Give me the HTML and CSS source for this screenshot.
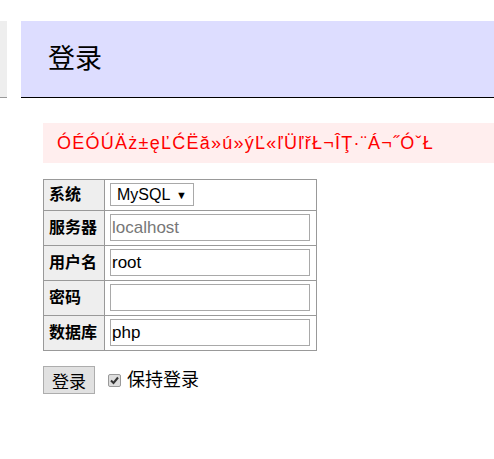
FILE: index.html
```html
<!DOCTYPE html>
<html lang="zh">
<head>
<meta charset="utf-8">
<title>登录</title>
<link rel="stylesheet" href="styles.css">
</head>
<body>
<div class="top">
  <div class="menu-strip"></div>
  <h2 class="title">登录</h2>
</div>
<div class="content">
  <div class="error">ÓÉÓÚÄż±ęĽĆËă»ú»ýĽ«ľÜľřŁ¬ÎŢ·¨Á¬˝ÓˇŁ</div>
  <table class="login">
    <tr class="row-first">
      <th>系统</th>
      <td><span class="select"><span class="select-text">MySQL</span><span class="select-arrow">▼</span></span></td>
    </tr>
    <tr>
      <th>服务器</th>
      <td><input class="field" type="text" placeholder="localhost"></td>
    </tr>
    <tr>
      <th>用户名</th>
      <td><input class="field" type="text" value="root"></td>
    </tr>
    <tr>
      <th>密码</th>
      <td><input class="field" type="password"></td>
    </tr>
    <tr>
      <th>数据库</th>
      <td><input class="field" type="text" value="php"></td>
    </tr>
  </table>
  <div class="actions">
    <button class="submit" type="button">登录</button>
    <label class="remember">
      <span class="check"><svg width="11" height="11" viewBox="0 0 11 11"><path d="M2 5.5 L4.5 8 L9 2.5" fill="none" stroke="#333" stroke-width="2"/></svg></span>
      保持登录
    </label>
  </div>
</div>
</body>
</html>
```

FILE: styles.css
```css
html, body {
  margin: 0;
  padding: 0;
  background: #fff;
}
body {
  font-family: "Liberation Sans", "Noto Sans CJK SC", sans-serif;
  font-size: 18px;
  line-height: 1.25;
  color: #000;
  overflow: hidden;
}
.top {
  display: flex;
  margin-top: 21px;
  gap: 14px;
}
.menu-strip {
  width: 7px;
  background: #eee;
  border-bottom: 1px solid #999;
}
.title {
  flex: 1;
  margin: 0;
  font-size: 27px;
  font-weight: normal;
  line-height: 34px;
  padding: 21px 27px;
  background: #ddf;
  border-bottom: 1px solid #000;
}
.content {
  padding-left: 43px;
}
.error {
  margin-top: 25px;
  background: #fee;
  color: red;
  padding: 9px 14px;
  line-height: 22px;
  letter-spacing: 1.25px;
  white-space: nowrap;
}
.login {
  margin-top: 16px;
  border-collapse: collapse;
  font-size: 16px;
}
.login th, .login td {
  border: 1px solid #999;
  padding: 3px 6px 4px 5px;
  vertical-align: middle;
}
.login th {
  background: #eee;
  text-align: left;
  font-weight: bold;
  width: 49px;
  line-height: 20px;
}
.select {
  position: relative;
  display: inline-flex;
  align-items: center;
  box-sizing: border-box;
  width: 84px;
  height: 23px;
  border: 1px solid #a9a9a9;
  padding-left: 6px;
  font-size: 16px;
  background: #fff;
  vertical-align: middle;
}
.select-arrow {
  position: absolute;
  right: 6px;
  top: 4px;
  font-size: 11px;
  line-height: 14px;
}
.field {
  display: block;
  box-sizing: border-box;
  width: 200px;
  height: 27px;
  border: 1px solid #a9a9a9;
  padding: 0 1px;
  margin: 0;
  font-family: "Liberation Sans", "Noto Sans CJK SC", sans-serif;
  font-size: 17px;
  color: #000;
  outline: none;
}
.field::placeholder {
  color: #777;
}
.actions {
  display: flex;
  align-items: center;
  margin-top: 15px;
  gap: 13px;
}
.submit {
  box-sizing: border-box;
  width: 52px;
  height: 28px;
  border: 1px solid #adadad;
  background: #e1e1e1;
  font-family: "Liberation Sans", "Noto Sans CJK SC", sans-serif;
  font-size: 17px;
  color: #000;
  padding: 0;
  border-radius: 0;
}
.remember {
  display: flex;
  align-items: center;
  gap: 6px;
  font-size: 18px;
}
.check {
  display: inline-flex;
  align-items: center;
  justify-content: center;
  box-sizing: border-box;
  width: 13px;
  height: 13px;
  border: 1px solid #999;
  border-radius: 2px;
  background: #ddd;
}
```
